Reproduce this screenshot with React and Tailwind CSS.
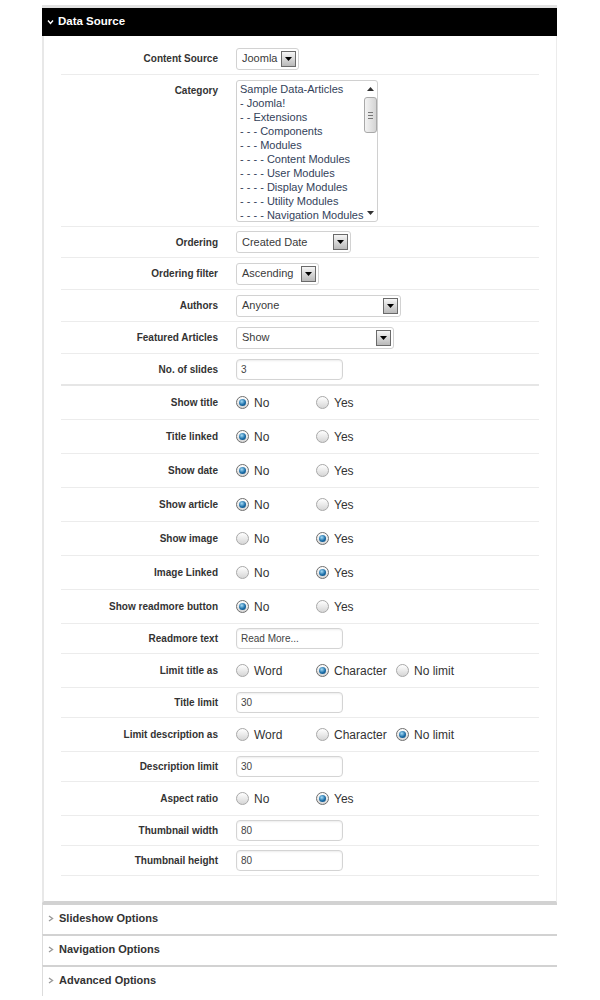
import React from 'react';

const categories = [
  'Sample Data-Articles',
  '- Joomla!',
  '- - Extensions',
  '- - - Components',
  '- - - Modules',
  '- - - - Content Modules',
  '- - - - User Modules',
  '- - - - Display Modules',
  '- - - - Utility Modules',
  '- - - - Navigation Modules',
];

const rows = [
  { label: 'Content Source', type: 'select', value: 'Joomla', w: 'w-[63px]', h: 'h-[32px]' },
  { label: 'Category', type: 'list', h: 'h-[152px]' },
  { label: 'Ordering', type: 'select', value: 'Created Date', w: 'w-[115px]', h: 'h-[31px]' },
  { label: 'Ordering filter', type: 'select', value: 'Ascending', w: 'w-[83px]', h: 'h-[32px]' },
  { label: 'Authors', type: 'select', value: 'Anyone', w: 'w-[165px]', h: 'h-[32px]' },
  { label: 'Featured Articles', type: 'select', value: 'Show', w: 'w-[158px]', h: 'h-[32px]' },
  { label: 'No. of slides', type: 'input', value: '3', h: 'h-[32px]', thick: true },
  { label: 'Show title', type: 'radio', options: ['No', 'Yes'], checked: 0 },
  { label: 'Title linked', type: 'radio', options: ['No', 'Yes'], checked: 0 },
  { label: 'Show date', type: 'radio', options: ['No', 'Yes'], checked: 0 },
  { label: 'Show article', type: 'radio', options: ['No', 'Yes'], checked: 0 },
  { label: 'Show image', type: 'radio', options: ['No', 'Yes'], checked: 1 },
  { label: 'Image Linked', type: 'radio', options: ['No', 'Yes'], checked: 1 },
  { label: 'Show readmore button', type: 'radio', options: ['No', 'Yes'], checked: 0 },
  { label: 'Readmore text', type: 'input', value: 'Read More...' },
  { label: 'Limit title as', type: 'radio', options: ['Word', 'Character', 'No limit'], checked: 1 },
  { label: 'Title limit', type: 'input', value: '30' },
  { label: 'Limit description as', type: 'radio', options: ['Word', 'Character', 'No limit'], checked: 2 },
  { label: 'Description limit', type: 'input', value: '30' },
  { label: 'Aspect ratio', type: 'radio', options: ['No', 'Yes'], checked: 1 },
  { label: 'Thumbnail width', type: 'input', value: '80' },
  { label: 'Thumbnail height', type: 'input', value: '80' },
];

const font = { fontFamily: '"Liberation Sans", Arial, sans-serif' };

const DownTri = () => (
  <svg width="7" height="4" viewBox="0 0 7 4">
    <polygon points="0,0 7,0 3.5,4" fill="#000" />
  </svg>
);

const Select = ({ value, w }) => (
  <div className={`flex h-[22px] items-center justify-between rounded-[3px] border border-[#d2d2d2] bg-white pl-[5px] pr-[2px] ${w}`}>
    <span className="text-[11px] text-[#3a3a3a]">{value}</span>
    <span className="flex h-[16px] w-[15px] items-center justify-center border border-[#6a6a6a] bg-gradient-to-b from-[#f6f6f6] to-[#b9b9b9]">
      <DownTri />
    </span>
  </div>
);

const TextInput = ({ value }) => (
  <div className="flex h-[21px] w-[107px] items-center rounded-[4px] border border-[#d4d4d4] bg-white px-[4px] shadow-[inset_0_1px_2px_rgba(0,0,0,0.08)]">
    <span className="text-[10px] text-[#444]">{value}</span>
  </div>
);

const Radio = ({ checked }) => (
  <span
    className={`flex h-[13px] w-[13px] items-center justify-center rounded-full border bg-gradient-to-b from-[#ffffff] to-[#d6d6d6] ${
      checked ? 'border-[#6e6e6e]' : 'border-[#a8a8a8]'
    }`}
  >
    {checked && (
      <span className="h-[7px] w-[7px] rounded-full bg-[radial-gradient(circle_at_40%_35%,#a6dcf7,#1a6ca6_55%,#0b4474)]" />
    )}
  </span>
);

const RadioGroup = ({ options, checked }) => (
  <div className="flex items-center">
    {options.map((o, i) => (
      <label key={o} className="flex w-[80px] items-center gap-[5px]">
        <Radio checked={i === checked} />
        <span className="text-[12px] text-[#333]">{o}</span>
      </label>
    ))}
  </div>
);

const ListBox = () => (
  <div className="flex h-[142px] w-[142px] rounded-[3px] border border-[#d0d0d0] bg-white">
    <ul className="flex-1 pl-[3px] pt-[1px]">
      {categories.map((c) => (
        <li key={c} className="h-[14px] whitespace-nowrap text-[11px] leading-[14px] text-[#33425a]">
          {c}
        </li>
      ))}
    </ul>
    <div className="flex w-[16px] flex-col items-center py-[3px]">
      <svg width="7" height="4" viewBox="0 0 7 4" className="mt-[3px]">
        <polygon points="0,4 7,4 3.5,0" fill="#333" />
      </svg>
      <div className="mt-[6px] flex h-[36px] w-[13px] flex-col items-center justify-center gap-[2px] rounded-[3px] border border-[#a9a9a9] bg-gradient-to-r from-[#f3f3f3] to-[#d4d4d4]">
        <span className="h-px w-[5px] bg-[#777]" />
        <span className="h-px w-[5px] bg-[#777]" />
        <span className="h-px w-[5px] bg-[#777]" />
      </div>
      <div className="flex-1" />
      <svg width="7" height="4" viewBox="0 0 7 4" className="mb-[3px]">
        <polygon points="0,0 7,0 3.5,4" fill="#333" />
      </svg>
    </div>
  </div>
);

const Row = ({ row }) => {
  let h = row.h;
  if (!h) h = row.type === 'radio' ? 'h-[34px]' : 'h-[30px]';
  const isList = row.type === 'list';
  return (
    <div
      className={`flex ${h} ${isList ? 'items-start pt-[5px]' : 'items-center'} ${
        row.thick ? 'border-b-2 border-[#e6e6e6]' : 'border-b border-[#ececec]'
      }`}
    >
      <div className={`w-[157px] text-right text-[10px] font-bold text-[#333] ${isList ? 'pt-[3px]' : ''}`}>
        {row.label}
      </div>
      <div className="ml-[18px]">
        {row.type === 'select' && <Select value={row.value} w={row.w} />}
        {row.type === 'list' && <ListBox />}
        {row.type === 'input' && <TextInput value={row.value} />}
        {row.type === 'radio' && <RadioGroup options={row.options} checked={row.checked} />}
      </div>
    </div>
  );
};

const Collapsed = ({ title }) => (
  <div className="flex h-[31px] items-center gap-[5px] border-l border-t-2 border-l-[#dcdcdc] border-t-[#d2d2d2] pb-[2px] pl-[5px]">
    <svg width="6" height="7" viewBox="0 0 6 7">
      <polyline points="1,1 4.5,3.5 1,6" fill="none" stroke="#9a9a9a" strokeWidth="1.4" />
    </svg>
    <span className="text-[11px] font-bold text-[#333]">{title}</span>
  </div>
);

export default function App() {
  return (
    <div className="min-h-[1000px] bg-white" style={font}>
      <div className="ml-[42px] w-[515px] pt-[5px]">
        <div className="border-t-[3px] border-[#e2e2e2]">
          <div className="flex h-[28px] items-center gap-[4px] bg-black pl-[5px]">
            <svg width="7" height="6" viewBox="0 0 7 6">
              <polyline points="1,1.5 3.5,4.5 6,1.5" fill="none" stroke="#fff" strokeWidth="1.4" />
            </svg>
            <span className="text-[11.5px] font-bold text-white">Data Source</span>
          </div>
          <div className="border-b-2 border-l-2 border-r border-b-[#d2d2d2] border-l-[#e8e8e8] border-r-[#ececec] px-[17px] pb-[25px] pt-[7px]">
            {rows.map((r) => (
              <Row key={r.label} row={r} />
            ))}
          </div>
        </div>
        <Collapsed title="Slideshow Options" />
        <Collapsed title="Navigation Options" />
        <Collapsed title="Advanced Options" />
      </div>
    </div>
  );
}
